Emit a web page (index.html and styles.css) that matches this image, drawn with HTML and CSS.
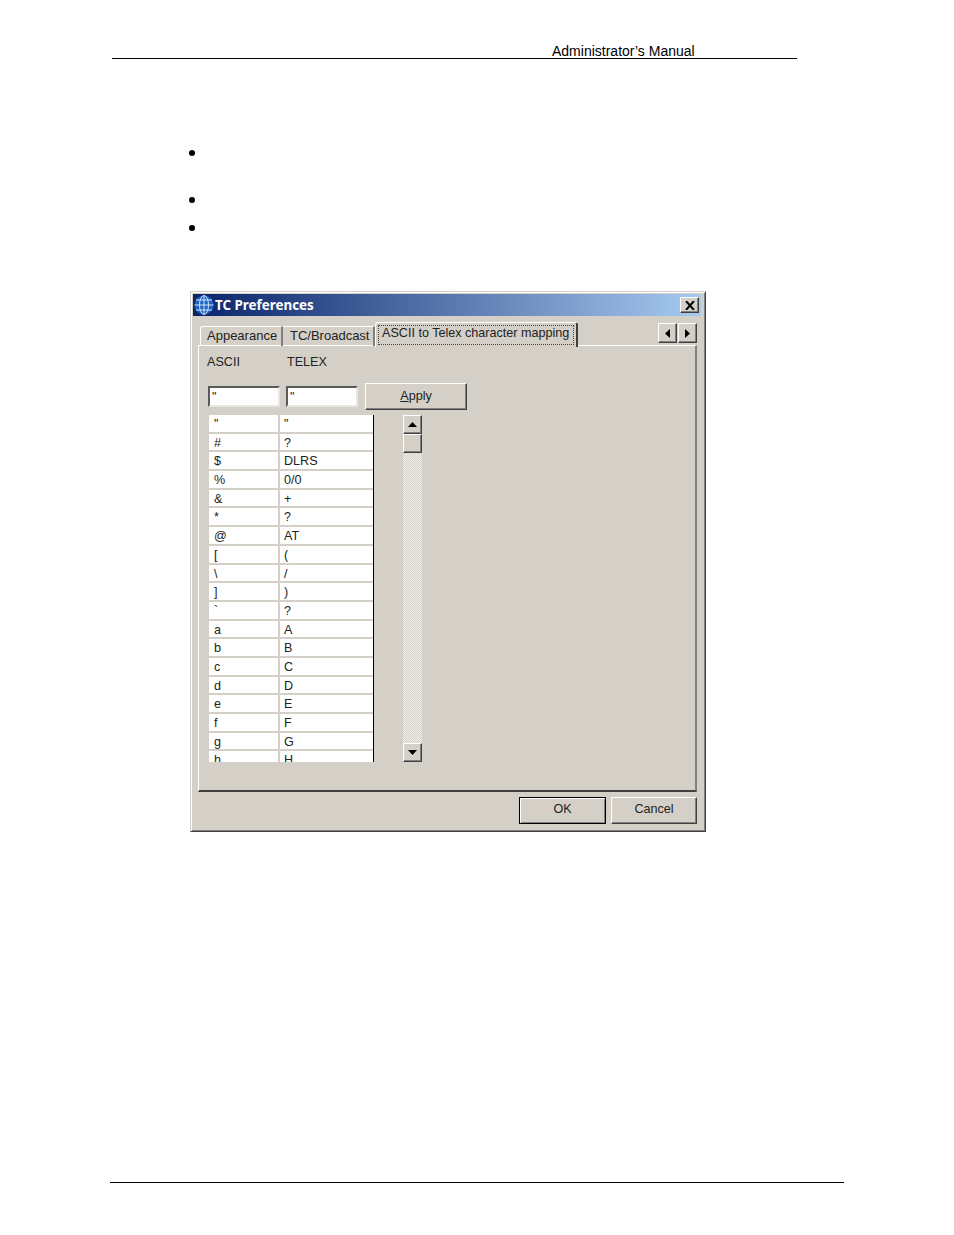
FILE: index.html
```html
<!DOCTYPE html>
<html lang="en">
<head>
  <meta charset="UTF-8" />
  <title>Administrator's Manual</title>
  <link rel="stylesheet" href="styles.css">
</head>
<body>

  <div class="doc-head">Administrator’s Manual</div>

  <ul class="bullets">
    <li class="tall"></li>
    <li></li>
    <li></li>
  </ul>

  <div class="dialog">
    <div class="titlebar">
      <svg class="globe" width="20" height="20" viewBox="0 0 20 20">
        <circle cx="10" cy="10" r="9.5" fill="#1d63c4"/>
        <g fill="none" stroke="#cfe4fa" stroke-width="1">
          <ellipse cx="10" cy="10" rx="4.5" ry="9.5"/>
          <path d="M10 .5V19.500M.5 10H19.500M2 5H18M2 15H18"/>
        </g>
      </svg>
      <span class="title">TC Preferences</span>
      <button class="close raised" type="button">
        <svg width="10" height="9" viewBox="0 0 10 9"><path d="M1 0L9 9M9 0L1 9" stroke="#000" stroke-width="2" fill="none"/></svg>
      </button>
    </div>

    <div class="tabs">
      <div class="tab first">Appearance</div>
      <div class="tab second">TC/Broadcast</div>
      <div class="tab active"><span class="focus">ASCII to Telex character mapping</span></div>
      <div class="tab-arrows">
        <div class="raised arrow"><svg width="5" height="9" viewBox="0 0 5 9"><path d="M5 0V9L0 4.500Z" fill="#000"/></svg></div>
        <div class="raised arrow"><svg width="5" height="9" viewBox="0 0 5 9"><path d="M0 0V9L5 4.500Z" fill="#000"/></svg></div>
      </div>
    </div>

    <div class="panel">
      <div class="labels">
        <span class="label">ASCII</span>
        <span class="label">TELEX</span>
      </div>

      <div class="edit-row">
        <input class="field" type="text" value="&quot;">
        <input class="field" type="text" value="&quot;">
        <button class="apply raised" type="button"><u>A</u>pply</button>
      </div>

      <div class="list-row">
        <div class="list">
          <div class="row"><span>"</span><span>"</span></div>
          <div class="row"><span>#</span><span>?</span></div>
          <div class="row"><span>$</span><span>DLRS</span></div>
          <div class="row"><span>%</span><span>0/0</span></div>
          <div class="row"><span>&amp;</span><span>+</span></div>
          <div class="row"><span>*</span><span>?</span></div>
          <div class="row"><span>@</span><span>AT</span></div>
          <div class="row"><span>[</span><span>(</span></div>
          <div class="row"><span>\</span><span>/</span></div>
          <div class="row"><span>]</span><span>)</span></div>
          <div class="row"><span>`</span><span>?</span></div>
          <div class="row"><span>a</span><span>A</span></div>
          <div class="row"><span>b</span><span>B</span></div>
          <div class="row"><span>c</span><span>C</span></div>
          <div class="row"><span>d</span><span>D</span></div>
          <div class="row"><span>e</span><span>E</span></div>
          <div class="row"><span>f</span><span>F</span></div>
          <div class="row"><span>g</span><span>G</span></div>
          <div class="row"><span>h</span><span>H</span></div>
        </div>

        <div class="scrollbar">
          <div class="raised scroll-btn"><svg width="9" height="5" viewBox="0 0 9 5"><path d="M0 5H9L4.500 0Z" fill="#000"/></svg></div>
          <div class="raised scroll-thumb"></div>
          <div class="scroll-track"></div>
          <div class="raised scroll-btn"><svg width="9" height="5" viewBox="0 0 9 5"><path d="M0 0H9L4.500 5Z" fill="#000"/></svg></div>
        </div>
      </div>
    </div>

    <div class="actions">
      <button class="ok raised" type="button">OK</button>
      <button class="cancel raised" type="button">Cancel</button>
    </div>
  </div>

  <div class="doc-foot"></div>

</body>
</html>
```

FILE: styles.css
```css
* {
  box-sizing: border-box;
}
body {
  margin: 0;
  background-color: #fff;
  font-family: "Liberation Sans", Arial, sans-serif;
  color: #000;
}

/* Document page */
.doc-head {
  margin-left: 112px;
  width: 685px;
  height: 59px;
  padding: 43px 0 0 440px;
  border-bottom: 1px solid #000;
  font-size: 14px;
  line-height: 16px;
}
.bullets {
  list-style: none;
  margin: 91px 0 0 189px;
  padding: 0;
}
.bullets li {
  height: 28px;
}
.bullets li.tall {
  height: 47px;
}
.bullets li::before {
  content: "";
  display: block;
  width: 6px;
  height: 6px;
  border-radius: 50%;
  background-color: #000;
}
.bullets li:last-child {
  height: 6px;
}
.doc-foot {
  margin: 350px 0 0 110px;
  width: 734px;
  border-top: 1px solid #000;
}

/* Dialog window */
.dialog {
  margin: 60px 0 0 190px;
  width: 516px;
  height: 541px;
  padding: 3px 4px 0 2px;
  background-color: #d4d0c8;
  border: 1px solid;
  border-color: #d4d0c8 #404040 #404040 #d4d0c8;
  box-shadow: inset 1px 1px #fff, inset -1px -1px #808080;
  font-size: 12.600px;
  color: #222;
}
.raised {
  background-color: #d4d0c8;
  border: 1px solid;
  border-color: #fff #404040 #404040 #fff;
  box-shadow: inset -1px -1px #808080;
  font-family: inherit;
  font-size: 12.600px;
  color: #222;
  padding: 0;
}
.titlebar {
  display: flex;
  align-items: center;
  height: 22px;
  padding: 0 2px 0 1px;
  margin-top: -1px;
  background: linear-gradient(to right, #0a246a, #a6caf0);
}
.globe {
  flex: none;
}
.title {
  margin-left: 1px;
  font-family: "Noto Sans", sans-serif;
  font-weight: bold;
  font-size: 13.400px;
  color: #fff;
}
.close {
  margin-left: auto;
  width: 19px;
  height: 16px;
  display: flex;
  align-items: center;
  justify-content: center;
}

/* Tabs */
.tabs {
  display: flex;
  align-items: flex-end;
  height: 29px;
  margin-top: 1px;
  padding-left: 7px;
  padding-right: 4px;
  margin-bottom: -1px;
  position: relative;
}
.tab {
  height: 20px;
  padding: 0 6px;
  font-size: 13px;
  line-height: 18px;
  white-space: nowrap;
  border-top: 1px solid #fff;
  border-right: 2px solid #808080;
}
.tab.first {
  width: 83px;
  border-left: 1px solid #fff;
  border-top-left-radius: 3px;
}
.tab.second {
  width: 92px;
  padding-left: 7px;
}
.tab.active {
  width: 203px;
  height: 25px;
  margin-bottom: -1px;
  padding: 2px;
  font-size: 12.600px;
  background-color: #d4d0c8;
  border-left: 1px solid #fff;
  border-right: 2px solid #404040;
  border-top-left-radius: 3px;
  border-top-right-radius: 3px;
  position: relative;
  z-index: 1;
}
.focus {
  display: block;
  height: 20px;
  padding-left: 3px;
  line-height: 15px;
  border: 1px dotted #444;
}
.tab-arrows {
  display: flex;
  margin-left: auto;
  margin-bottom: 3px;
  gap: 1px;
}
.arrow {
  display: flex;
  align-items: center;
  justify-content: center;
  width: 19px;
  height: 20px;
}

/* Panel */
.panel {
  width: 499px;
  height: 447px;
  margin-left: 5px;
  padding: 8px 0 0 8px;
  border-top: 1px solid #fff;
  border-right: 2px solid #808080;
  border-bottom: 2px solid #404040;
  border-left: 1px solid #fff;
}
.labels {
  display: flex;
  height: 16px;
  line-height: 16px;
}
.label {
  width: 80px;
}
.edit-row {
  display: flex;
  align-items: center;
  gap: 6px;
  height: 27px;
  margin-top: 13px;
  padding-left: 1px;
}
.field {
  width: 72px;
  height: 21px;
  padding: 0 2px;
  background-color: #fff;
  border: 2px solid;
  border-color: #5a5a5a #e8e6e2 #e8e6e2 #5a5a5a;
  font-family: inherit;
  font-size: 12.600px;
  color: #222;
  outline: none;
}
.apply {
  width: 102px;
  height: 27px;
  margin-left: 1px;
  padding-bottom: 2px;
}
.list-row {
  display: flex;
  gap: 29px;
  margin-top: 5px;
  padding-left: 2px;
}
.list {
  width: 165px;
  height: 347px;
  overflow: hidden;
  background-color: #fff;
  border-right: 1px solid #000;
}
.row {
  display: grid;
  grid-template-columns: 71px 1fr;
  height: 18.700px;
  line-height: 19px;
  border-bottom: 2px solid #d4d0c8;
}
.row span {
  padding-left: 4px;
}
.row span:first-child {
  padding-left: 5px;
  border-right: 2px solid #d4d0c8;
}

/* Scrollbar */
.scrollbar {
  display: flex;
  flex-direction: column;
  width: 19px;
  height: 347px;
}
.scroll-btn {
  display: flex;
  align-items: center;
  justify-content: center;
  height: 19px;
  flex: none;
}
.scroll-thumb {
  height: 19px;
  flex: none;
}
.scroll-track {
  flex: 1;
  background: repeating-conic-gradient(#f0efeb 0 25%, #d4d0c8 0 50%) 0 0 / 2px 2px;
}

/* Bottom buttons */
.actions {
  display: flex;
  justify-content: flex-end;
  gap: 5px;
  margin-top: 5px;
  padding-right: 4px;
}
.ok,
.cancel {
  width: 86px;
  height: 27px;
  padding-bottom: 3px;
}
.ok {
  width: 87px;
  border-color: #000;
  box-shadow: inset 1px 1px #fff, inset -1px -1px #808080;
}
```
